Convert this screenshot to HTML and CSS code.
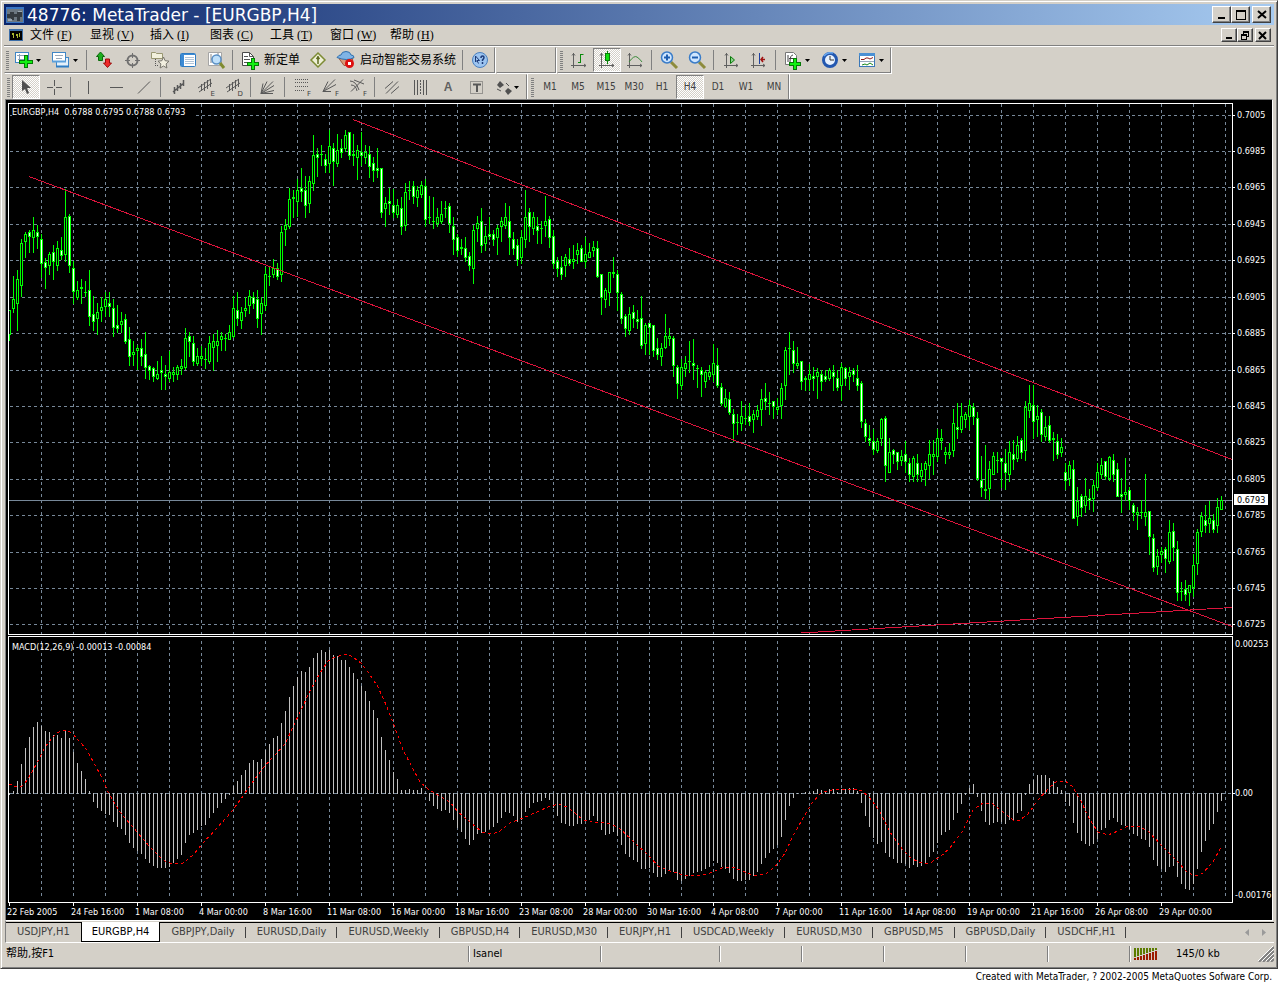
FILE: index.html
```html
<!DOCTYPE html>
<html lang="zh-CN">
<head>
<meta charset="utf-8">
<title>48776: MetaTrader - [EURGBP,H4]</title>
<link rel="stylesheet" href="styles.css">
</head>
<body>
<main class="window">
  <header class="titlebar">
    <svg class="app-icon" width="18" height="16" viewBox="0 0 18 16" aria-hidden="true"><rect width="18" height="16" fill="#3a76c4"/><rect x="1" y="2" width="16" height="13" fill="#6b7680"/><path d="M1 7h3v-2h4v2h3v-2h5v5h-2v4h-3v-4h-3v3h-3v-2h-4z" fill="#343a40"/><path d="M2 12h4v2h-4zM12 4h4v1h-4z" fill="#9aa6b0"/></svg>
    <h1 class="title">48776: MetaTrader - [EURGBP,H4]</h1>
    <div class="caption-buttons">
      <button class="cap" aria-label="Minimize"><svg width="12" height="11"><path d="M2 8h7v2h-7z"/></svg></button>
      <button class="cap" aria-label="Maximize"><svg width="12" height="11"><path fill-rule="evenodd" d="M1 1h10v10h-10zM2 3v7h8v-7z"/></svg></button>
      <button class="cap cap-close" aria-label="Close"><svg width="12" height="11"><path d="M2 2l8 7M10 2l-8 7" stroke="#000" stroke-width="2"/></svg></button>
    </div>
  </header>
  <nav class="menubar">
    <svg class="doc-icon" width="14" height="12" viewBox="0 0 14 12" aria-hidden="true"><rect width="14" height="12" fill="#3c6ea8"/><rect x="1" y="2" width="12" height="9" fill="#000"/><path d="M3 4h2v5h-1v-3h-1zM7 5h2v4h-1v-2h-1zM10 4h1v4h-1z" fill="#a8b830"/></svg>
    <a class="menu" href="#file">文件 (<u>F</u>)</a>
    <a class="menu" href="#view">显视 (<u>V</u>)</a>
    <a class="menu" href="#insert">插入 (<u>I</u>)</a>
    <a class="menu" href="#charts">图表 (<u>C</u>)</a>
    <a class="menu" href="#tools">工具 (<u>T</u>)</a>
    <a class="menu" href="#window">窗口 (<u>W</u>)</a>
    <a class="menu" href="#help">帮助 (<u>H</u>)</a>
    <div class="caption-buttons">
      <button class="cap cap-small" aria-label="Minimize chart"><svg width="10" height="9"><path d="M2 6h6v2h-6z"/></svg></button>
      <button class="cap cap-small" aria-label="Restore chart"><svg width="10" height="9"><path fill-rule="evenodd" d="M3 0h6v6h-2v3h-6v-6h2zM4 2v1h3v2h1v-3zM2 5v3h4v-3z"/></svg></button>
      <button class="cap cap-small cap-close" aria-label="Close chart"><svg width="10" height="9"><path d="M1 1l7 7M8 1l-7 7" stroke="#000" stroke-width="2"/></svg></button>
    </div>
  </nav>

  <div class="bars">
    <div class="bar-row">
      <div class="toolbar">
        <span class="grip"></span>
        <button class="tool drop" aria-label="New chart"><svg class="ico" viewBox="0 0 20 20"><rect x="1.500" y="2.500" width="13" height="10" fill="#fff" stroke="#3f86c6"/><path d="M3 5.500h10M4 9.500h9M5.500 4v7" stroke="#8aa0b8" fill="none"/><path d="M10 5h4v5h5v4h-5v4h-4v-4h-5v-4h5z" fill="#067a06"/><path d="M11 6h2v5h5v2h-5v4h-2v-4h-5v-2h5z" fill="#12f012"/></svg><svg class="caret" viewBox="0 0 5 3"><path d="M0 0h5l-2.500 3z"/></svg></button>
        <button class="tool drop" aria-label="Profiles"><svg class="ico" viewBox="0 0 20 20"><rect x="5.500" y="7.500" width="12" height="9" fill="#e4f0fa" stroke="#3f86c6"/><path d="M5 16.500h13" stroke="#2d7cc4" stroke-width="2"/><rect x="1.500" y="2.500" width="13" height="9" fill="#fff" stroke="#3f86c6"/><path d="M1 11.500h14" stroke="#5ba0dc" stroke-width="2"/><path d="M4 5.500h8M5 8.500h6" stroke="#9aa8b8"/></svg><svg class="caret" viewBox="0 0 5 3"><path d="M0 0h5l-2.500 3z"/></svg></button>
        <span class="sep"></span>
        <button class="tool" aria-label="Market watch"><svg class="ico" viewBox="0 0 20 20"><path d="M6.500 2l4 4.500h-2v4h-4v-4h-2z" fill="#1fae1f" stroke="#0a6a0a"/><path d="M13.500 17.500l4-4.500h-2v-4h-4v4h-2z" fill="#ee2a2a" stroke="#9c0c0c"/></svg></button>
        <button class="tool" aria-label="Data window"><svg class="ico" viewBox="0 0 20 20" fill="none" stroke="#707070"><circle cx="10.500" cy="10.500" r="5" stroke-width="2"/><path d="M10.500 3v5M10.500 13v5M3 10.500h5M13 10.500h5"/></svg></button>
        <button class="tool" aria-label="Navigator"><svg class="ico" viewBox="0 0 20 20"><path d="M1.500 2.500h4l1 1h6v5h-11z" fill="#f2f0dc" stroke="#999772"/><path d="M5.500 9v7M7 15.500h2" stroke="#555" stroke-dasharray="1 1"/><path d="M13.500 7l1.600 3.700 3.900.5-2.900 2.700.8 4.100-3.400-2-3.400 2 .8-4.100-2.900-2.700 3.900-.5z" fill="#f2efdf" stroke="#77756c"/></svg></button>
        <button class="tool" aria-label="Terminal"><svg class="ico" viewBox="0 0 20 20"><rect x="2.500" y="3.500" width="15" height="13" rx="1" fill="#fff" stroke="#2f7cc2"/><path d="M3 4h14v1h-14zM3 5h3v11h-3z" fill="#3c8ad4"/><path d="M7 7.500h9M7 9.500h9M7 11.500h9M7 13.500h9" stroke="#b0c4d8"/></svg></button>
        <button class="tool" aria-label="Strategy tester"><svg class="ico" viewBox="0 0 20 20"><path d="M2.500 2.500h13v13h-13z" fill="#fff" stroke="#a5a5a5"/><path d="M5 4v9M5 9h3M12 3v3" stroke="#888"/><circle cx="10.500" cy="9.500" r="4.500" fill="#bfe0fa" stroke="#5a8fc4" stroke-width="1.500"/><path d="M14 13l4 5" stroke="#7f8b30" stroke-width="3"/></svg></button>
        <span class="sep"></span>
        <button class="tool wide"><svg class="ico" viewBox="0 0 20 20"><path d="M2.500 2.500h7l4 4v9h-11z" fill="#fff" stroke="#4a4a4a"/><path d="M9.500 2.500v4h4M4 6.500h4M4 9.500h6M4 12.500h4" stroke="#555" fill="none"/><path d="M11 8h4v4h4v4h-4v4h-4v-4h-4v-4h4z" fill="#067a06"/><path d="M12 9h2v4h4v2h-4v4h-2v-4h-4v-2h4z" fill="#12f012"/></svg>新定单</button>
        <button class="tool" aria-label="Expert properties"><svg class="ico" viewBox="0 0 20 20"><path d="M10 3l7 7-7 7-7-7z" fill="#eef0d8" stroke="#7d8b34" stroke-width="1.500"/><path d="M10 6v8M8.500 9l1.500-2 1.500 2" stroke="#5f6b20" stroke-width="1.500" fill="none"/></svg></button>
        <button class="tool wide"><svg class="ico" viewBox="0 0 20 20"><path d="M3 8.500q7-3 14 0l-3 7h-6z" fill="#d89a78" stroke="#a25a3c"/><path d="M1 7.500q2-3 4-2.500q.500-3.500 5-3.500t5 3.500q3 0 3 2.500q-7 4-17 0z" fill="#7fb4e6" stroke="#2f6fae"/><circle cx="13.500" cy="13.500" r="4.500" fill="#dd1010"/><rect x="12" y="12" width="3" height="3" fill="#fff"/></svg>启动智能交易系统</button>
        <span class="sep"></span>
        <button class="tool" aria-label="Help"><svg class="ico" viewBox="0 0 20 20"><circle cx="10" cy="10" r="7.500" fill="#9cc4f0" stroke="#4a80c0"/><path d="M5.500 6v6l1.500-1.500 1.500 3M5.500 6l4 4.500h-2.500" stroke="#1c3a78" fill="none"/><path d="M11 8q0-2 1.500-2t1.500 1.500q0 1-1.500 2.500v1M12.500 12v2" stroke="#1c3a78" stroke-width="1.500" fill="none"/></svg></button>
      </div>
      <div class="toolbar blank"></div>
      <div class="toolbar">
        <span class="grip grip-in"></span>
        <button class="tool" aria-label="Bar chart"><svg class="ico" viewBox="0 0 20 20" fill="none" stroke="#606060"><path d="M4.500 3v15M2 15.500h15M3 5.500l1.500-2 1.500 2M15 14l2 1.500-2 1.500"/><path d="M11.500 4v9M11.500 4.500h3M9 12.500h3" stroke="#0a8a0a"/></svg></button>
        <button class="tool pressed" aria-label="Candlesticks"><svg class="ico" viewBox="0 0 20 20" fill="none" stroke="#606060"><path d="M4.500 3v15M2 15.500h15M3 5.500l1.500-2 1.500 2M15 14l2 1.500-2 1.500"/><path d="M10.500 1v13" stroke="#0a8a0a"/><rect x="8.500" y="3.500" width="4" height="7" fill="#10e010" stroke="#0a7a0a"/></svg></button>
        <button class="tool" aria-label="Line chart"><svg class="ico" viewBox="0 0 20 20" fill="none" stroke="#606060"><path d="M4.500 3v15M2 15.500h15M3 5.500l1.500-2 1.500 2M15 14l2 1.500-2 1.500"/><path d="M4 12q5-7 8-5t5 5" stroke="#3a8a3a"/></svg></button>
        <span class="sep"></span>
        <button class="tool" aria-label="Zoom in"><svg class="ico" viewBox="0 0 20 20"><path d="M12 12l6 6" stroke="#8d8b3c" stroke-width="3"/><circle cx="8" cy="7.500" r="5.500" fill="#cfe6ff" stroke="#3a7cc8" stroke-width="1.500"/><path d="M5 7.500h6M8 4.500v6" stroke="#1f5eb0" stroke-width="2"/></svg></button>
        <button class="tool" aria-label="Zoom out"><svg class="ico" viewBox="0 0 20 20"><path d="M12 12l6 6" stroke="#8d8b3c" stroke-width="3"/><circle cx="8" cy="7.500" r="5.500" fill="#cfe6ff" stroke="#3a7cc8" stroke-width="1.500"/><path d="M5 7.500h6" stroke="#1f5eb0" stroke-width="2"/></svg></button>
        <span class="sep"></span>
        <button class="tool" aria-label="Auto scroll"><svg class="ico" viewBox="0 0 20 20" fill="none" stroke="#606060"><path d="M5.500 3v15M3 15.500h14M4 5.500l1.500-2 1.500 2M15 14l2 1.500-2 1.500"/><path d="M9.500 6.500l4 3.500-4 3.500z" fill="#8ad08a" stroke="#0a7a0a"/></svg></button>
        <button class="tool" aria-label="Chart shift"><svg class="ico" viewBox="0 0 20 20" fill="none" stroke="#606060"><path d="M4.500 3v15M2 15.500h14M3 5.500l1.500-2 1.500 2M14 14l2 1.500-2 1.500"/><path d="M10.500 3v11" stroke="#1c3fa0"/><path d="M16 9.500h-4M14 7l-2 2.500 2 2.500" stroke="#a01010" stroke-width="1.500"/></svg></button>
        <span class="sep"></span>
        <button class="tool drop" aria-label="Indicators"><svg class="ico" viewBox="0 0 20 20"><path d="M2.500 2.500h8l3 3v9h-11z" fill="#fff" stroke="#777"/><path d="M5 5v7M7 12q0-7 3-7M6 8.500h4" stroke="#444" fill="none"/><path d="M10 8h4v4h4v4h-4v4h-4v-4h-4v-4h4z" fill="#067a06"/><path d="M11 9h2v4h4v2h-4v4h-2v-4h-4v-2h4z" fill="#12f012"/></svg><svg class="caret" viewBox="0 0 5 3"><path d="M0 0h5l-2.500 3z"/></svg></button>
        <button class="tool drop" aria-label="Periods"><svg class="ico" viewBox="0 0 20 20"><circle cx="10" cy="10" r="6.500" fill="#e8f2ff" stroke="#2358b0" stroke-width="3"/><path d="M4 6q3-4 9-3" stroke="#6aa8ee" stroke-width="1.500" fill="none"/><path d="M10 6v4h4" stroke="#333" fill="none"/></svg><svg class="caret" viewBox="0 0 5 3"><path d="M0 0h5l-2.500 3z"/></svg></button>
        <button class="tool drop" aria-label="Templates"><svg class="ico" viewBox="0 0 20 20"><rect x="2.500" y="3.500" width="15" height="13" fill="#fff" stroke="#3a78b8"/><path d="M2 3h16v3h-16z" fill="#4a90d4"/><path d="M3 11.500h14" stroke="#9ab"/><path d="M4 9.500h3l2-1.500h2l2 1 3-1.500" stroke="#8b1a1a" fill="none"/><path d="M5 15l3-1 2 1 3-2 3 2" stroke="#1a8a1a" fill="none"/></svg><svg class="caret" viewBox="0 0 5 3"><path d="M0 0h5l-2.500 3z"/></svg></button>
      </div>
    </div>
    <div class="bar-row">
      <div class="toolbar">
        <span class="grip grip-in"></span>
        <button class="tool pressed" aria-label="Cursor"><svg class="ico" viewBox="0 0 20 20"><path d="M6 3v11l3-2 2 5 2-1-2-5h4z" fill="#505050"/></svg></button>
        <button class="tool" aria-label="Crosshair"><svg class="ico line" viewBox="0 0 20 20"><path d="M10.500 3v6M10.500 12v6M3 10.500h6M12 10.500h6"/></svg></button>
        <span class="sep"></span>
        <button class="tool" aria-label="Vertical line"><svg class="ico line" viewBox="0 0 20 20"><path d="M10.500 4v13"/></svg></button>
        <button class="tool" aria-label="Horizontal line"><svg class="ico line" viewBox="0 0 20 20"><path d="M4 10.500h13"/></svg></button>
        <button class="tool" aria-label="Trendline"><svg class="ico line" viewBox="0 0 20 20"><path d="M4 16.500l12-12"/></svg></button>
        <span class="sep"></span>
        <button class="tool" aria-label="Linear regression channel"><svg class="ico line" viewBox="0 0 20 20"><path d="M5 15l11-9M6.500 10v7M9.500 8v6M12.500 6v6M15.500 3v6" stroke-width="1.500"/></svg></button>
        <button class="tool" aria-label="Equidistant channel"><svg class="ico line" viewBox="0 0 20 20"><path d="M2 11l13-9M3 15l13-9M5.500 7v7M8.500 5v9M11.500 3v9M14.500 2v8"/></svg><small>E</small></button>
        <button class="tool" aria-label="Standard deviation channel"><svg class="ico line" viewBox="0 0 20 20"><path d="M2 11l13-9M3 15l13-9M5.500 7v7M8.500 5v9M11.500 3v9M14.500 2v8"/></svg><small>D</small></button>
        <span class="sep"></span>
        <button class="tool" aria-label="Gann fan"><svg class="ico line" viewBox="0 0 20 20"><path d="M3 16.500l2-10M3 16.500l6-12M3 16.500l12-12M3 16.500l13-8M3 16.500l13-3M3 16.500h12"/></svg></button>
        <span class="sep"></span>
        <button class="tool" aria-label="Fibonacci retracement"><svg class="ico line" viewBox="0 0 20 20"><path d="M3 2.500h14M3 5.500h14M3 9.500h14M3 13.500h9" stroke-dasharray="1 1"/></svg><small>F</small></button>
        <button class="tool" aria-label="Fibonacci fan"><svg class="ico line" viewBox="0 0 20 20"><path d="M3 14.500l5-10M3 14.500l12-12M3 14.500l13-7M3 14.500h8"/></svg><small>F</small></button>
        <button class="tool" aria-label="Fibonacci arcs"><svg class="ico line" viewBox="0 0 20 20"><path d="M3 14.500l12-12M2 4q6 0 9 9M6 3q5 2 10 4M3 8q5 0 6 6"/></svg><small>F</small></button>
        <span class="sep"></span>
        <button class="tool" aria-label="Andrews pitchfork"><svg class="ico line" viewBox="0 0 20 20"><path d="M3 11.500l8-7M4 16.500l12-12M9 16.500l8-7"/></svg></button>
        <button class="tool" aria-label="Cycle lines"><svg class="ico line" viewBox="0 0 20 20"><path d="M4.500 3v15M7.500 3v15M13.500 3v15M16.500 3v15"/><path d="M10.500 3v15" stroke-dasharray="2 1"/></svg></button>
        <button class="tool letter">A</button>
        <button class="tool" aria-label="Text label"><svg class="ico line" viewBox="0 0 20 20"><path d="M4.500 4.500h12v12h-12z" stroke-dasharray="1 1"/><path d="M7 7.500h8M11 7v8" stroke-width="2"/></svg></button>
        <button class="tool drop tight" aria-label="Arrows"><svg class="ico" viewBox="0 0 20 20" fill="#505050"><path d="M6 4l4 4-4 3-3-3zM14 11l4 3-4 4-3-4z"/><path d="M3 12l4 2M12 6l3 3" stroke="#505050"/></svg><svg class="caret" viewBox="0 0 5 3"><path d="M0 0h5l-2.500 3z"/></svg></button>
      </div>
      <div class="toolbar">
        <span class="grip grip-in"></span>
        <button class="tool period">M1</button>
        <button class="tool period">M5</button>
        <button class="tool period">M15</button>
        <button class="tool period">M30</button>
        <button class="tool period">H1</button>
        <button class="tool period pressed">H4</button>
        <button class="tool period">D1</button>
        <button class="tool period">W1</button>
        <button class="tool period">MN</button>
      </div>
    </div>
  </div>

  <section class="chart">
    <svg id="chart" viewBox="6 100 1266 820" role="img" aria-label="EURGBP H4 chart with MACD"></svg>
  </section>

  <nav class="tabs">
    <a class="tab" href="#t1">USDJPY,H1</a>
    <a class="tab active" href="#t2">EURGBP,H4</a>
    <a class="tab" href="#t3">GBPJPY,Daily</a>
    <a class="tab" href="#t4">EURUSD,Daily</a>
    <a class="tab" href="#t5">EURUSD,Weekly</a>
    <a class="tab" href="#t6">GBPUSD,H4</a>
    <a class="tab" href="#t7">EURUSD,M30</a>
    <a class="tab" href="#t8">EURJPY,H1</a>
    <a class="tab" href="#t9">USDCAD,Weekly</a>
    <a class="tab" href="#t10">EURUSD,M30</a>
    <a class="tab" href="#t11">GBPUSD,M5</a>
    <a class="tab" href="#t12">GBPUSD,Daily</a>
    <a class="tab" href="#t13">USDCHF,H1</a>
    <div class="tab-scroll">
      <button aria-label="Scroll tabs left"><svg width="4" height="7"><path d="M4 0v7l-4-3.500z"/></svg></button>
      <button aria-label="Scroll tabs right"><svg width="4" height="7"><path d="M0 0v7l4-3.500z"/></svg></button>
    </div>
  </nav>

  <footer class="status">
    <span class="cell help">帮助,按F1</span>
    <span class="cell profile">Isanel</span>
    <span class="cell date"></span>
    <span class="cell"></span>
    <span class="cell"></span>
    <span class="cell"></span>
    <span class="cell"></span>
    <span class="cell"></span>
    <span class="cell traffic">
      <svg width="24" height="12" viewBox="0 0 24 12" shape-rendering="crispEdges" aria-hidden="true"><path d="M0 0h2v9h-2zM3 0h2v8h-2zM6 0h2v7h-2zM9 0h2v6h-2zM12 0h2v5h-2zM15 0h2v4h-2zM18 0h2v3h-2zM21 0h2v2h-2z" fill="#5c7c00"/><path d="M0 10h2v2h-2zM3 9h2v3h-2zM6 8h2v4h-2zM9 7h2v5h-2zM12 6h2v6h-2zM15 5h2v7h-2zM18 4h2v8h-2zM21 3h2v9h-2z" fill="#9c1c00"/></svg>
      145/0 kb
      <svg class="resize" width="16" height="16" aria-hidden="true"><path d="M1 16l15-15M5 16l11-11M9 16l7-7M13 16l3-3" stroke="#808080" stroke-width="2"/><path d="M0 15l15-15M4 15l12-12M8 15l8-8M12 15l4-4" stroke="#fff"/></svg>
    </span>
  </footer>
</main>
<p class="credit">Created with MetaTrader, ? 2002-2005 MetaQuotes Sofware Corp.</p>
<script src="script.js"></script>
</body>
</html>
```

FILE: styles.css
```css
:root {
  --face: #d4d0c8;
  --shade: #808080;
  --dark: #404040;
  --ui: "DejaVu Sans Condensed", "DejaVu Sans", "Noto Sans CJK SC", sans-serif;
}

* { box-sizing: border-box; }

body {
  margin: 0;
  background: #fff;
  color: #000;
  font: 10px/16px var(--ui);
}

a { color: inherit; text-decoration: none; }

button {
  margin: 0;
  padding: 0;
  border: 0;
  background: none;
  color: inherit;
  font: inherit;
}

svg { display: block; flex: none; }

.window {
  padding: 3px;
  background: var(--face);
  border: 1px solid;
  border-color: var(--face) var(--dark) var(--dark) var(--face);
  box-shadow: inset 1px 1px #fff, inset -1px -1px var(--shade);
}

.titlebar {
  display: flex;
  align-items: center;
  height: 21px;
  padding: 0 3px 0 2px;
  background: linear-gradient(90deg, #0a246a, #a6caf0);
}

.title {
  flex: 1;
  margin: 0 0 0 3px;
  color: #fff;
  font: 17px/20px "DejaVu Sans", sans-serif;
}

.caption-buttons { display: flex; margin-left: auto; }

.cap {
  display: flex;
  align-items: center;
  justify-content: center;
  width: 19px;
  height: 17px;
  background: var(--face);
  border: 1px solid;
  border-color: #fff var(--dark) var(--dark) #fff;
  box-shadow: inset -1px -1px var(--shade);
}

.cap-small { width: 16px; height: 14px; }
.cap-close { margin-left: 2px; }

.menubar {
  display: flex;
  align-items: center;
  height: 21px;
  padding: 0 3px 0 5px;
  border-bottom: 1px solid var(--shade);
  font: 12px/18px "Liberation Serif", "Noto Sans CJK SC", serif;
}

.doc-icon { margin-right: 7px; }
.menu { width: 60px; white-space: nowrap; }

.bars { border-top: 1px solid #fff; }
.bar-row { display: flex; height: 27px; }
.bar-row:last-child { height: 25px; }

.toolbar {
  display: flex;
  align-items: center;
  margin-bottom: 1px;
  border: 1px solid;
  border-color: transparent var(--shade) var(--shade) transparent;
  box-shadow: 1px 1px #fff;
}

.toolbar + .toolbar { margin-left: 1px; }
.bar-row:last-child .toolbar { margin-bottom: 0; border-bottom: 0; box-shadow: 1px 0 #fff; }
.blank { width: 60px; }

.grip {
  width: 3px;
  height: 19px;
  margin: 0 1px;
  background: repeating-linear-gradient(var(--shade) 0 1px, var(--face) 1px 2px);
}

.grip-in { margin: 0 2px; }

.sep {
  width: 1px;
  height: 20px;
  margin: 0 3px 0 2px;
  background: var(--shade);
}

.tool {
  position: relative;
  display: flex;
  align-items: center;
  justify-content: center;
  width: 28px;
  height: 24px;
  color: #404040;
  font: 10px/16px var(--ui);
}

.ico { width: 20px; height: 20px; }
.line { fill: none; stroke: #585858; }
.caret { width: 5px; height: 3px; margin-left: 2px; }

.drop { width: 37px; justify-content: flex-start; padding-left: 4px; }
.tight { width: 36px; }
.tight .caret { margin-left: 0; }

.wide {
  gap: 4px;
  width: auto;
  padding: 0 4px;
  color: #000;
  font: 12px/16px "Liberation Sans", "Noto Sans CJK SC", sans-serif;
}

.tool small {
  position: absolute;
  right: 5px;
  bottom: 1px;
  padding-left: 1px;
  background: var(--face);
  font: 7px/7px "DejaVu Sans", sans-serif;
}

.letter { font: bold 12px/16px "Liberation Sans", sans-serif; color: #606060; }

.pressed {
  border: 1px solid;
  border-color: var(--shade) #fff #fff var(--shade);
  background: repeating-conic-gradient(#fff 0 25%, var(--face) 0 50%) 0 0 / 2px 2px;
}

.chart {
  margin: 0 1px;
  background: #000;
  border: 1px solid;
  border-color: var(--shade) #fff #fff var(--shade);
}

.chart svg { width: 100%; height: auto; }
.chart text { fill: #fff; font: 9px "DejaVu Sans Condensed", "DejaVu Sans", sans-serif; white-space: pre; }
.chart .tag-text { fill: #000; }
.grid { stroke: #778899; stroke-dasharray: 3 3; }
.price-line { stroke: #778899; }
.trend { stroke: #dc143c; }
.signal { fill: none; stroke: #f00; stroke-dasharray: 3 3; }
.frame { fill: none; stroke: #fff; }
.lime { fill: #0f0; }
.hollow { fill: #000; }
.solid { fill: #fff; }
.hist { fill: #c0c0c0; }

.tabs {
  display: flex;
  height: 22px;
  margin-left: 1px;
  padding-top: 1px;
  border-left: 1px solid var(--shade);
  border-bottom: 1px solid #fff;
  color: #404040;
  font: 11px/18px "DejaVu Sans Condensed", "DejaVu Sans", sans-serif;
  background: linear-gradient(#000, #000) 0 1px / 100% 1px no-repeat;
}

.tab {
  position: relative;
  padding: 1px 11px 0;
  white-space: nowrap;
}

.tab:not(.active)::after {
  content: "";
  position: absolute;
  right: 0;
  top: 5px;
  bottom: 4px;
  width: 1px;
  background: var(--dark);
}

.tab:first-child::after { display: none; }

.active {
  height: 20px;
  padding: 1px 10px 0;
  background: #fff;
  border: solid #000;
  border-width: 0 1px 1px;
  color: #000;
}

.tab-scroll { display: flex; gap: 13px; margin-left: auto; padding-right: 8px; fill: #9a9a9a; }

.status { display: flex; height: 22px; padding: 0 0 0 2px; font: 11px/20px var(--ui); }

.cell {
  width: 82px;
  margin: 3px 0;
  border-left: 1px solid var(--shade);
  box-shadow: inset 1px 0 #fff;
  padding-left: 4px;
  line-height: 16px;
}

.help { flex: 1; border: 0; box-shadow: none; padding: 0; }
.profile { width: 132px; }
.date { width: 119px; }
.traffic { display: flex; align-items: center; gap: 18px; width: 145px; }
.resize { margin-left: auto; }

.credit { margin: 0; padding: 0 6px; text-align: right; font: 10px/16px "DejaVu Sans Condensed", "DejaVu Sans", sans-serif; }
```

FILE: script.js
```js
// Candles are spaced 4 units apart; each row is high, body top, body bottom, low, direction
// (1 = rising, 0 = falling) on the vertical scale of the plot.
const candles = `310 310 335 341 1;276 299 309 313 1;270 279 304 331 1;239 243 286 297 1;232 234 242 258 1;230 232 237 253 0;217 230 238 253 1;225 232 237 249 0;234 239 264 278 0;258 262 268 289 0;252 254 266 275 1;245 252 262 280 0;241 248 266 271 1;237 250 256 260 0;189 217 255 262 1;214 216 266 273 0;261 268 292 304 0;281 290 298 300 1;279 287 289 304 1;281 292 292 297 1;270 290 317 326 0;296 314 322 331 0;303 312 319 335 1;297 307 311 322 1;292 299 307 317 1;292 303 307 317 0;299 308 328 337 0;305 325 329 333 0;312 321 325 333 1;314 319 342 344 0;327 339 357 366 0;341 352 355 366 1;345 348 351 370 1;339 348 357 366 0;332 354 368 379 0;365 366 371 380 0;367 368 377 382 0;361 374 379 380 1;356 370 373 390 0;365 374 377 390 0;351 372 379 382 1;367 372 375 382 1;365 367 375 380 1;359 366 369 375 1;328 338 368 370 1;332 336 342 357 0;336 343 362 366 0;348 356 364 366 1;346 356 359 366 1;348 359 359 369 1;336 343 362 364 1;334 341 348 371 1;330 341 346 362 1;332 336 340 351 1;334 338 338 351 1;325 332 340 340 1;296 308 337 338 1;292 310 319 326 0;307 312 321 329 1;297 308 311 317 1;290 296 306 314 1;292 297 304 309 0;290 299 319 328 0;297 303 314 335 1;267 274 306 311 1;267 276 276 286 1;259 268 275 278 1;263 268 277 280 0;226 232 275 282 1;219 225 230 246 1;188 199 227 229 1;190 197 199 218 0;179 190 202 217 1;168 188 192 202 0;176 190 206 218 0;176 181 204 213 1;135 155 184 191 1;148 154 158 177 0;145 154 154 166 1;154 159 166 173 0;130 146 164 173 1;143 148 162 186 0;134 150 164 167 1;139 148 153 158 0;130 135 149 152 1;132 132 156 160 0;134 154 156 166 0;145 150 158 180 1;132 152 156 166 0;145 152 158 164 1;146 154 167 178 0;157 163 171 182 0;148 168 171 178 0;168 168 213 218 0;197 203 209 227 1;188 201 204 215 0;189 205 213 218 0;199 205 215 218 1;197 208 227 235 0;183 192 226 231 1;181 190 190 200 1;181 186 197 204 0;186 190 198 207 1;181 185 195 198 1;179 186 220 227 0;196 217 217 224 1;197 221 221 229 1;208 217 224 227 1;201 214 222 224 1;201 208 208 218 1;203 206 224 233 0;217 226 240 255 0;234 237 251 257 0;239 247 249 255 1;237 248 258 262 0;252 256 266 271 0;225 230 269 284 1;216 223 229 242 1;208 221 246 253 0;226 236 244 251 1;217 234 237 240 0;230 234 240 246 0;225 228 238 255 1;217 221 227 242 1;203 217 226 229 1;206 221 238 255 0;232 239 249 255 0;239 245 260 266 0;230 237 258 264 1;190 217 240 248 1;208 212 227 242 0;212 217 229 235 1;217 226 231 244 0;221 228 228 244 1;196 221 226 237 1;216 219 238 248 0;230 236 264 269 0;257 261 269 277 0;256 267 275 280 0;254 257 266 277 1;248 259 264 266 0;245 259 262 269 1;243 250 255 264 1;245 248 262 262 0;237 254 262 268 1;243 252 258 258 1;241 247 251 257 1;241 248 277 278 0;274 274 298 315 0;288 290 300 308 1;272 272 293 306 1;257 272 274 278 1;270 274 293 311 0;292 294 319 324 0;314 316 329 337 0;307 314 331 335 1;305 312 319 328 0;310 319 322 329 0;296 318 346 349 0;323 325 344 355 1;323 323 328 355 0;325 325 351 357 0;338 348 355 360 0;343 348 357 366 1;314 336 348 349 1;328 336 339 346 1;336 338 366 377 0;365 367 384 399 0;359 367 386 390 1;356 363 369 377 1;341 361 361 373 1;339 363 366 380 0;365 368 368 388 1;367 370 375 397 0;370 372 382 388 1;365 372 377 380 1;344 363 375 382 1;348 365 386 388 0;383 387 404 406 0;389 398 407 408 1;392 399 413 415 0;409 414 424 442 0;414 422 422 435 1;401 416 424 431 1;405 418 418 425 1;403 416 422 426 0;410 414 420 433 1;405 410 417 420 1;389 399 410 426 1;383 398 402 410 0;392 403 403 415 1;401 401 407 419 0;398 407 410 415 1;383 388 406 419 1;347 350 386 400 1;332 348 348 375 1;341 350 364 373 0;347 363 366 369 1;361 361 382 390 0;376 378 380 391 0;364 374 380 391 1;367 376 379 391 0;368 372 377 399 1;370 374 382 391 0;370 376 380 382 0;368 370 379 381 1;365 372 377 391 0;370 378 388 391 0;363 367 386 401 1;367 368 379 386 0;367 372 377 390 1;368 370 375 382 0;365 378 386 391 0;381 383 422 428 0;419 423 437 442 0;425 438 441 446 0;429 441 450 455 0;438 441 451 453 1;418 419 439 446 1;416 418 466 482 0;438 452 473 473 1;449 450 455 464 0;452 452 462 470 0;450 456 461 466 1;441 454 462 473 0;458 463 475 482 0;456 458 477 482 1;454 463 475 482 0;463 470 477 482 1;461 463 470 486 1;440 454 466 479 1;440 454 457 475 1;429 438 457 462 1;429 438 441 450 1;447 452 455 464 1;443 452 455 459 1;409 423 451 457 1;403 427 430 439 0;403 416 430 433 1;412 414 420 428 1;400 405 417 430 1;403 407 417 425 0;412 418 479 481 0;456 480 488 497 0;445 489 491 499 0;461 469 489 501 1;452 456 475 475 1;452 460 460 473 1;458 458 462 488 0;449 463 473 490 0;441 452 475 482 1;440 454 460 470 0;436 445 459 462 1;438 440 453 459 0;401 407 451 461 1;385 403 411 418 1;385 405 422 439 0;405 416 420 437 1;409 412 435 442 0;416 427 437 441 1;416 425 441 443 0;432 438 440 461 0;434 441 455 459 0;438 447 453 457 1;463 472 481 490 0;461 465 479 486 1;460 469 519 519 0;487 501 517 526 1;494 496 508 517 0;478 496 506 513 1;489 498 501 510 0;480 485 499 512 1;463 472 488 491 1;458 465 475 479 1;461 461 477 480 0;456 457 479 481 1;454 460 475 482 0;463 469 497 497 0;478 494 497 513 0;458 492 495 501 1;487 490 501 510 0;503 505 513 521 0;507 512 515 530 1;500 512 512 519 1;474 512 517 526 1;511 511 537 555 0;534 538 568 572 0;549 556 567 575 1;547 551 555 563 1;547 549 559 573 0;520 532 562 564 1;523 531 548 561 0;541 549 593 601 0;582 591 591 601 1;580 589 595 601 0;585 585 593 606 1;554 565 588 597 1;529 532 564 575 1;512 516 532 537 1;505 520 526 533 0;501 518 524 533 1;514 520 530 533 0;498 507 526 533 1;496 500 510 510 1`
  .split(";").map(row => row.split(" ").map(Number));

const macd = [-1,2,12,29,45,56,66,71,67,62,61,58,58,55,63,55,41,30,22,14,2,-8,-14,-17,-20,-21,-28,-33,-35,-41,-49,-54,-57,-60,-65,-69,-72,-74,-74,-74,-73,-69,-65,-61,-49,-41,-39,-36,-32,-31,-24,-19,-14,-9,-5,-1,7,12,18,23,30,33,31,34,43,49,55,57,70,82,96,107,116,122,121,126,135,140,143,141,143,138,137,133,133,126,120,114,107,102,92,83,75,56,43,33,21,14,3,3,4,3,3,5,0,-7,-12,-15,-17,-16,-19,-26,-34,-38,-45,-51,-46,-40,-39,-38,-35,-33,-29,-24,-18,-19,-22,-28,-26,-18,-14,-9,-8,-7,-4,-6,-14,-22,-29,-30,-32,-32,-30,-30,-27,-26,-22,-27,-36,-41,-40,-38,-42,-51,-60,-63,-66,-68,-75,-75,-74,-79,-83,-83,-80,-76,-78,-86,-87,-85,-82,-79,-78,-77,-75,-73,-67,-69,-73,-75,-79,-85,-87,-87,-86,-86,-82,-78,-70,-64,-59,-55,-51,-43,-26,-12,-4,0,0,1,1,2,4,3,1,4,4,1,4,4,5,5,2,-9,-22,-33,-44,-50,-48,-59,-63,-65,-69,-69,-70,-74,-71,-73,-72,-69,-63,-58,-49,-41,-38,-36,-26,-19,-10,-1,5,9,-3,-17,-28,-31,-29,-28,-28,-30,-26,-27,-19,-17,-1,9,13,18,18,18,15,12,6,3,-8,-12,-29,-39,-47,-50,-52,-50,-45,-36,-34,-26,-24,-28,-31,-32,-35,-40,-42,-45,-46,-53,-66,-72,-75,-78,-73,-72,-83,-90,-95,-96,-90,-75,-58,-47,-36,-30,-18,-7];

const signal = "9,784 17,787 22,786 28,779 37,763 45,747 53,737 60,731 65,730 72,733 80,742 87,750 95,765 102,778 109,794 120,812 137,832 150,847 163,860 172,864 183,863 193,855 203,843 217,828 227,817 235,807 243,796 252,783 263,768 273,757 285,744 293,727 302,708 310,691 320,673 328,661 335,657 347,654 353,657 362,664 370,675 378,687 387,707 395,728 403,750 412,767 420,782 429,790 440,796 450,802 458,812 470,822 482,832 493,834 500,831 510,823 523,818 537,812 548,807 558,804 567,807 575,813 583,820 592,822 607,823 618,827 633,841 650,857 658,866 670,871 683,875 693,876 708,874 722,868 732,867 743,871 750,874 757,876 767,873 775,867 785,853 793,836 803,818 812,803 822,792 832,790 853,789 862,791 870,798 880,812 890,832 902,849 912,859 922,863 930,863 940,857 950,848 962,832 973,810 983,803 993,804 1003,812 1013,820 1020,820 1028,814 1038,800 1050,787 1057,781 1065,781 1072,786 1080,799 1090,820 1098,832 1108,835 1118,831 1128,826 1138,826 1148,831 1163,847 1177,861 1187,872 1195,876 1203,873 1213,862 1222,845";

const priceRows = [115, 151, 187, 224, 260, 297, 333, 370, 406, 442, 479, 515, 552, 588, 624];
const dates = ["22 Feb 2005", "24 Feb 16:00", "1 Mar 08:00", "4 Mar 00:00", "8 Mar 16:00", "11 Mar 08:00", "16 Mar 00:00", "18 Mar 16:00", "23 Mar 08:00", "28 Mar 00:00", "30 Mar 16:00", "4 Apr 08:00", "7 Apr 00:00", "11 Apr 16:00", "14 Apr 08:00", "19 Apr 00:00", "21 Apr 16:00", "26 Apr 08:00", "29 Apr 00:00"];

const out = [];
const line = (cls, x1, y1, x2, y2) =>
  out.push(`<line class="${cls}" x1="${x1}" y1="${y1}" x2="${x2}" y2="${y2}"/>`);
const rect = (cls, x, y, w, h) =>
  out.push(`<rect class="${cls}" x="${x}" y="${y}" width="${w}" height="${h}"/>`);
const text = (x, y, value, cls = "") =>
  out.push(`<text class="${cls}" x="${x}" y="${y}">${value}</text>`);

out.push('<g shape-rendering="crispEdges">');
for (let x = 41; x < 1230; x += 32) {
  line("grid", x + 0.5, 104, x + 0.5, 634);
  line("grid", x + 0.5, 641, x + 0.5, 899);
}
for (const y of priceRows) line("grid", 10, y + 0.5, 1232, y + 0.5);
line("grid", 10, 793.5, 1232, 793.5);
line("price-line", 9, 500.5, 1232, 500.5);

candles.forEach(([high, top, bottom, low, rising], i) => {
  const x = 9 + i * 4;
  rect("lime", x, high, 1, Math.max(low - high, 1));
  rect("lime", x - 1, top, 3, Math.max(bottom - top, 1));
  if (bottom - top > 2) rect(rising ? "hollow" : "solid", x, top + 1, 1, bottom - top - 2);
});

macd.forEach((value, i) => {
  const x = 9 + i * 4;
  if (value >= 0) rect("hist", x, 793 - value, 1, value + 1);
  else rect("hist", x, 793, 1, 1 - value);
});
out.push(`<polyline class="signal" points="${signal}"/>`);

line("trend", 29, 176.5, 1232, 626.5);
line("trend", 353, 119.5, 1232, 459.5);
line("trend", 801, 633, 1232, 607.5);

out.push('<path class="frame" d="M8.5 103.500h1224v531h-1224zM8.500 636.500h1224v266h-1224z"/>');
for (const y of [...priceRows, 793]) line("frame", 1233, y + 0.5, 1235, y + 0.5);
dates.forEach((_, i) => line("frame", 9.5 + i * 64, 903, 9.5 + i * 64, 906));
rect("hollow", 12, 106, 184, 11);
rect("solid", 1234, 494, 34, 11);
out.push("</g>");

text(12, 115, "EURGBP,H4  0.6788 0.6795 0.6788 0.6793");
text(12, 650, "MACD(12,26,9) -0.00013 -0.00084");
priceRows.forEach((y, i) => text(1237, y + 3, (0.7005 - i * 0.002).toFixed(4)));
text(1237, 503, "0.6793", "tag-text");
text(1235, 647, "0.00253");
text(1235, 796, "0.00");
text(1235, 898, "-0.00176");
dates.forEach((label, i) => text(7 + i * 64, 915, label));

document.getElementById("chart").innerHTML = out.join("");
```
